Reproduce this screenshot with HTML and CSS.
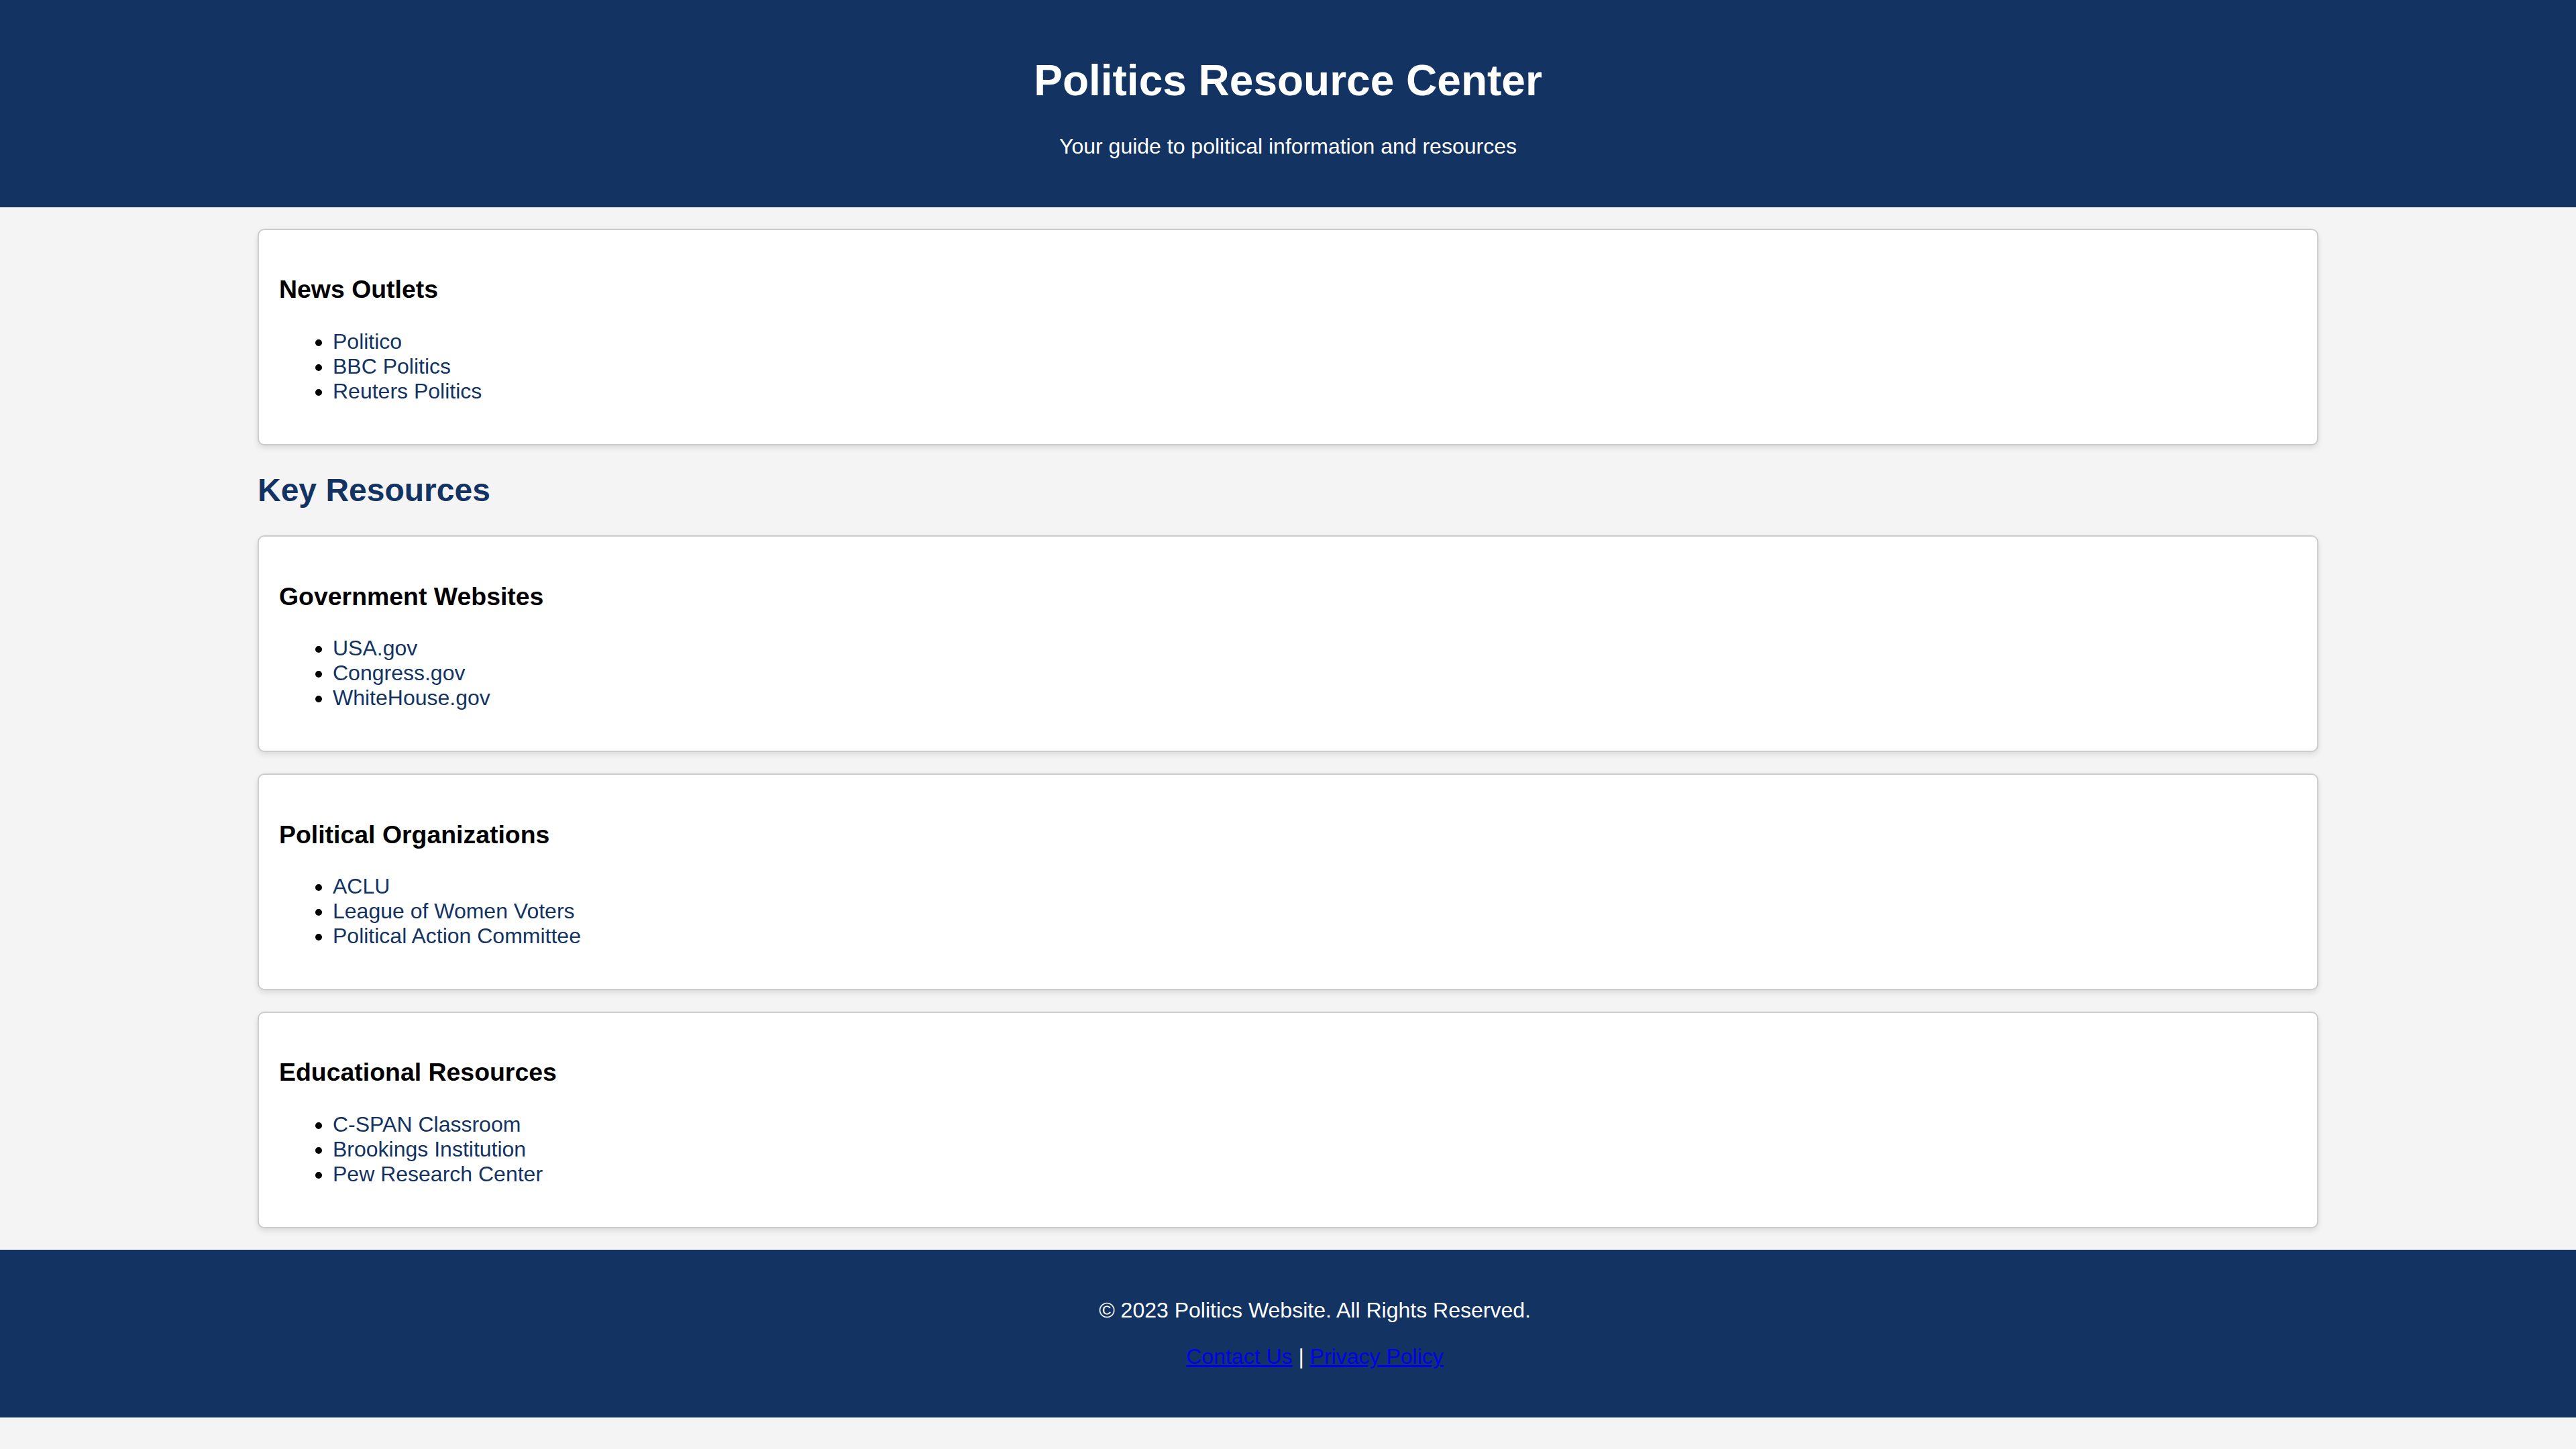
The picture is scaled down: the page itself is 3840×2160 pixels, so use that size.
FILE: index.html
```html
<!DOCTYPE html>
<html lang="en">
<head>
<meta charset="utf-8">
<title>Politics Resource Center</title>
<link rel="stylesheet" href="styles.css">
</head>
<body>
<header class="site-header">
  <h1 class="site-title">Politics Resource Center</h1>
  <p class="site-tagline">Your guide to political information and resources</p>
</header>
<main class="container">
  <section class="card">
    <h3 class="card-title">News Outlets</h3>
    <ul class="card-list">
      <li><a href="#">Politico</a></li>
      <li><a href="#">BBC Politics</a></li>
      <li><a href="#">Reuters Politics</a></li>
    </ul>
  </section>
  <h2 class="section-title">Key Resources</h2>
  <section class="card">
    <h3 class="card-title">Government Websites</h3>
    <ul class="card-list">
      <li><a href="#">USA.gov</a></li>
      <li><a href="#">Congress.gov</a></li>
      <li><a href="#">WhiteHouse.gov</a></li>
    </ul>
  </section>
  <section class="card">
    <h3 class="card-title">Political Organizations</h3>
    <ul class="card-list">
      <li><a href="#">ACLU</a></li>
      <li><a href="#">League of Women Voters</a></li>
      <li><a href="#">Political Action Committee</a></li>
    </ul>
  </section>
  <section class="card">
    <h3 class="card-title">Educational Resources</h3>
    <ul class="card-list">
      <li><a href="#">C-SPAN Classroom</a></li>
      <li><a href="#">Brookings Institution</a></li>
      <li><a href="#">Pew Research Center</a></li>
    </ul>
  </section>
</main>
<footer class="site-footer">
  <p class="footer-copy">&copy; 2023 Politics Website. All Rights Reserved.</p>
  <p class="footer-links"><a href="#" class="footer-link">Contact Us</a> | <a href="#" class="footer-link">Privacy Policy</a></p>
</footer>
</body>
</html>
```
FILE: styles.css
```css
html, body {
  margin: 0;
  padding: 0;
}
body {
  font-family: "Liberation Sans", Arial, sans-serif;
  font-size: 32px;
  background: #f4f4f4;
  color: #000;
}
.site-header {
  background: #133363;
  color: #fff;
  text-align: center;
  padding: 40px;
}
.site-title {
  font-size: 64px;
  font-weight: bold;
  margin: 42.88px 0;
}
.site-tagline {
  font-size: 32px;
  margin: 32px 0;
}
.container {
  width: 80%;
  margin: 0 auto;
}
.card {
  background: #fff;
  border: 2px solid #ccc;
  border-radius: 10px;
  padding: 30px 30px 28px;
  margin: 32px 0;
  box-shadow: 0 4px 8px rgba(0, 0, 0, 0.1);
}
.card-title {
  font-size: 37.44px;
  font-weight: bold;
  margin: 37.44px 0;
}
.card-list {
  margin: 32px 0;
  padding-left: 80px;
  list-style: disc;
}
.card-list a {
  color: #133363;
  text-decoration: none;
}
.section-title {
  font-size: 48px;
  font-weight: bold;
  color: #133363;
  margin: 39.84px 0;
}
.site-footer {
  background: #133363;
  color: #fff;
  text-align: center;
  padding: 40px 0 40px 80px;
}
.footer-copy,
.footer-links {
  margin: 32px 0;
}
.footer-link {
  color: #0000ee;
  text-decoration: underline;
}
```
